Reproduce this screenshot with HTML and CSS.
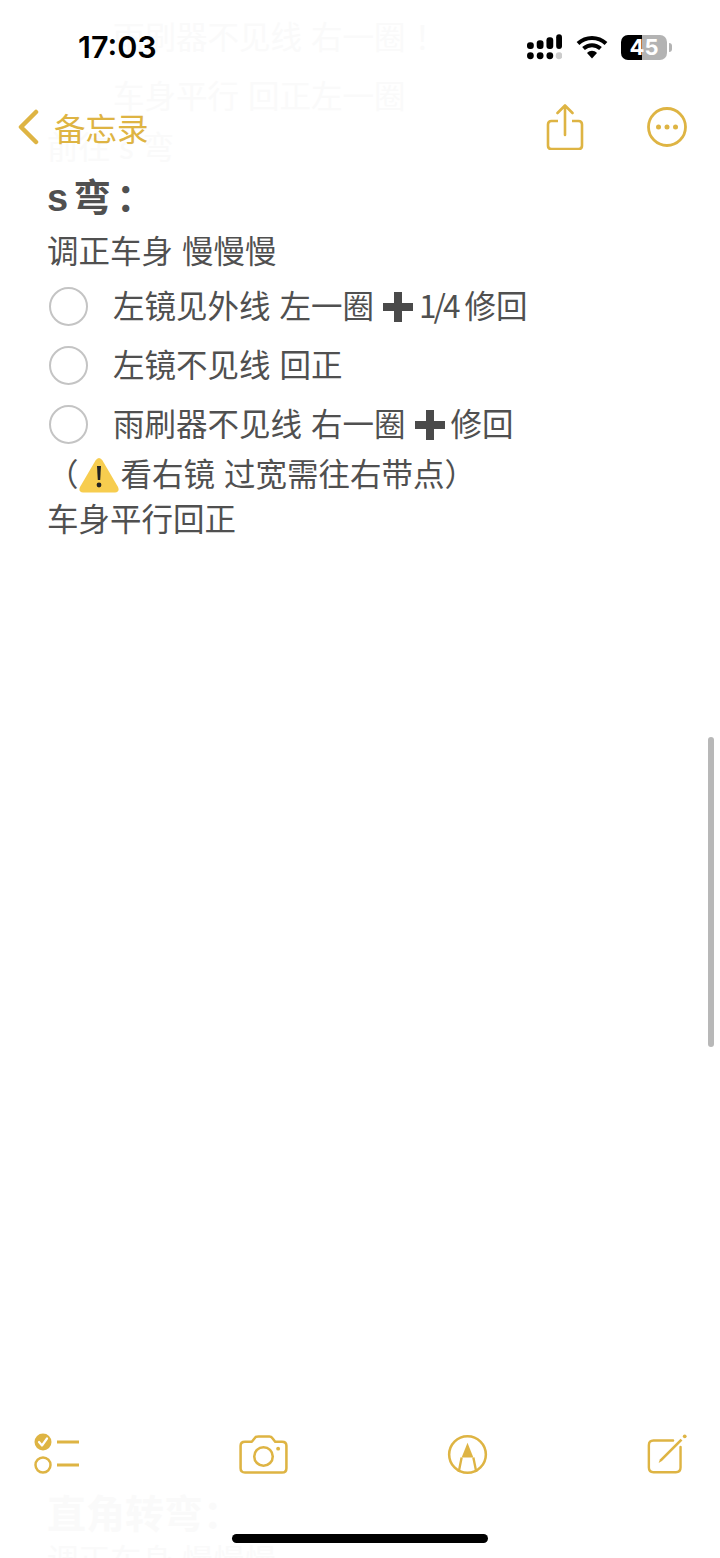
FILE: index.html
```html
<!DOCTYPE html>
<html>
<head>
	<meta charset="utf-8">
	<title>备忘录</title>
	<link rel="stylesheet" href="styles.css">
</head>
<body>
	<div class="page">
		<!-- faint text scrolled under the bars -->
		<div class="ghost ghost-1">雨刷器不见线 右一圈 ！</div>
		<div class="ghost ghost-2">车身平行 回正左一圈</div>
		<div class="ghost ghost-3">前往 s 弯</div>
		<div class="ghost ghost-4">直角转弯：</div>
		<div class="ghost ghost-5">调正车身 慢慢慢</div>

		<div class="statusbar">
			<span class="time">17:03</span>
			<div class="status-icons">
				<svg class="signal" width="35" height="26" viewBox="0 0 36 26">
					<g fill="#000">
						<rect x="0" y="8" width="7" height="7" rx="3"/>
						<rect x="10" y="6" width="7" height="9" rx="3"/>
						<rect x="20" y="3" width="7" height="12" rx="3"/>
						<rect x="30" y="0" width="6" height="15" rx="3"/>
						<circle cx="3.5" cy="22" r="3.5"/>
						<circle cx="13.5" cy="22" r="3.5"/>
						<circle cx="23.5" cy="22" r="3.5"/>
					</g>
					<circle cx="33" cy="22" r="3.5" fill="#ccc"/>
				</svg>
				<svg class="wifi" width="32" height="24" viewBox="0 0 32 24">
					<path d="M2 8.5C10 1 22 1 30 8.5" fill="none" stroke="#000" stroke-width="4"/>
					<path d="M7.5 13.5C12.5 9 19.5 9 24.5 13.5" fill="none" stroke="#000" stroke-width="4"/>
					<path d="M11 18C14 15 18 15 21 18L16 23.5Z" fill="#000"/>
				</svg>
				<div class="battery">
					<div class="battery-body"><span>45</span></div>
					<div class="battery-tip"></div>
				</div>
			</div>
		</div>

		<div class="navbar">
			<div class="back">
				<svg width="22" height="36" viewBox="0 0 22 36">
					<path d="M19 3L4 18L19 33" fill="none" stroke="#deb443" stroke-width="4.5" stroke-linecap="round" stroke-linejoin="round"/>
				</svg>
				<span>备忘录</span>
			</div>
			<div class="nav-actions">
				<svg width="38" height="46" viewBox="0 0 38 46">
					<path d="M12 17H5.500Q2 17 2 20.500V41.500Q2 45 5.500 45H32.500Q36 45 36 41.500V20.500Q36 17 32.500 17H26" fill="none" stroke="#deb443" stroke-width="2.600"/>
					<path d="M19 31V2M11.500 9L19 1.500L26.500 9" fill="none" stroke="#deb443" stroke-width="2.600" stroke-linecap="round" stroke-linejoin="round"/>
				</svg>
				<svg width="40" height="40" viewBox="0 0 40 40">
					<circle cx="20" cy="20" r="18.500" fill="none" stroke="#deb443" stroke-width="2.800"/>
					<circle cx="11.500" cy="20" r="2.500" fill="#deb443"/>
					<circle cx="20" cy="20" r="2.500" fill="#deb443"/>
					<circle cx="28.500" cy="20" r="2.500" fill="#deb443"/>
				</svg>
			</div>
		</div>

		<div class="note">
			<h1 class="note-title">s弯：</h1>
			<div class="line">调正车身 慢慢慢</div>
			<div class="check-row">
				<span class="circle"></span>
				<span>左镜见外线 左一圈<svg class="plus" width="30" height="30" viewBox="0 0 30 30"><path d="M11 0H19V11H30V19H19V30H11V19H0V11H11Z" fill="#4a4a4a"/></svg><span class="frac">1/4</span>修回</span>
			</div>
			<div class="check-row">
				<span class="circle"></span>
				<span>左镜不见线 回正</span>
			</div>
			<div class="check-row">
				<span class="circle"></span>
				<span>雨刷器不见线 右一圈<svg class="plus" width="30" height="30" viewBox="0 0 30 30"><path d="M11 0H19V11H30V19H19V30H11V19H0V11H11Z" fill="#4a4a4a"/></svg>修回</span>
			</div>
			<div class="line warn-line">（<svg class="warn" width="40" height="36" viewBox="0 0 40 36"><path d="M20 1Q22 1 23.500 3.500L39 30Q41 35 36 35.500H4Q-1 35 1 30L16.500 3.500Q18 1 20 1Z" fill="#f7cd4f"/><path d="M18 9H22L21.200 23H18.800Z" fill="#222"/><circle cx="20" cy="28" r="2.400" fill="#222"/></svg>看右镜 过宽需往右带点）</div>
			<div class="line">车身平行回正</div>
		</div>

		<div class="toolbar">
			<svg width="46" height="44" viewBox="0 0 46 44">
				<circle cx="9" cy="10" r="8.500" fill="#deb443"/>
				<path d="M5 10L8 13.500L13 6.500" fill="none" stroke="#fff" stroke-width="2.200" stroke-linecap="round" stroke-linejoin="round"/>
				<circle cx="9" cy="33" r="7.500" fill="none" stroke="#deb443" stroke-width="2.500"/>
				<path d="M23 10H45M23 33H45" stroke="#deb443" stroke-width="2.800"/>
			</svg>
			<svg width="49" height="39" viewBox="0 0 50 40">
				<path d="M6 7H13L17 2Q18 1.500 20 1.500H31Q33 1.500 34 3L37 7H44Q48.500 7 48.500 11V34Q48.500 38.500 44 38.500H6Q1.500 38.500 1.500 34V11Q1.500 7 6 7Z" fill="none" stroke="#deb443" stroke-width="2.600" stroke-linejoin="round"/>
				<circle cx="25" cy="22" r="9.500" fill="none" stroke="#deb443" stroke-width="2.600"/>
				<circle cx="40" cy="14" r="2" fill="#deb443"/>
			</svg>
			<svg width="41" height="41" viewBox="0 0 42 42">
				<circle cx="21" cy="21" r="18.800" fill="none" stroke="#deb443" stroke-width="2.600"/>
				<path d="M21 9L27 24H15Z" fill="#deb443"/>
				<path d="M15 24L12 39M27 24L30 39" fill="none" stroke="#deb443" stroke-width="2.400"/>
			</svg>
			<svg width="41" height="41" viewBox="0 0 44 44">
				<path d="M28 7H7Q2 7 2 12V36Q2 41 7 41H31Q36 41 36 36V14" fill="none" stroke="#deb443" stroke-width="2.600" stroke-linecap="round"/>
				<path d="M14 27L36 5L38 7L16 29L12.500 31Z" fill="#deb443"/>
				<circle cx="40.500" cy="2.500" r="2" fill="#deb443"/>
			</svg>
		</div>

		<div class="home-indicator"></div>
		<div class="scrollbar"></div>
	</div>
</body>
</html>
```

FILE: styles.css
```css
* {
	box-sizing: border-box;
}

html, body {
	margin: 0;
	padding: 0;
	background: #fff;
}

.page {
	position: relative;
	width: 720px;
	height: 1558px;
	overflow: hidden;
	display: flex;
	flex-direction: column;
	background: #fff;
	color: #505050;
	font-family: "Noto Sans CJK SC", "Noto Sans", sans-serif;
	font-size: 31.500px;
	word-spacing: 2px;
}

/* faint text under the bars */
.ghost {
	position: absolute;
	color: #fafafa;
	white-space: nowrap;
	line-height: 46px;
}
.ghost-1 { left: 113px; top: 12px; }
.ghost-2 { left: 113px; top: 71px; }
.ghost-3 { left: 47px; top: 122px; }
.ghost-4 { left: 47px; top: 1488px; font-size: 39px; font-weight: 700; }
.ghost-5 { left: 47px; top: 1535px; }

/* status bar */
.statusbar {
	position: relative;
	height: 100px;
	flex-shrink: 0;
	display: flex;
	justify-content: space-between;
	align-items: flex-start;
	padding: 28px 48px 0 78px;
}
.time {
	font-family: Inter, Roboto, sans-serif;
	font-weight: 600;
	font-size: 30.500px;
	line-height: 38px;
	color: #000;
}
.status-icons {
	display: flex;
	align-items: center;
	gap: 14px;
	padding-top: 6px;
}
.wifi {
	margin-right: -1px;
}
.battery {
	display: flex;
	align-items: center;
	gap: 2px;
}
.battery-body {
	width: 46px;
	height: 25px;
	border-radius: 7px;
	background: linear-gradient(90deg, #000 0 46%, #b3b3b3 46% 100%);
	color: #fff;
	font-family: Inter, Roboto, sans-serif;
	font-weight: 700;
	font-size: 22px;
	line-height: 25px;
	text-align: center;
}
.battery-tip {
	width: 3px;
	height: 9px;
	border-radius: 0 3px 3px 0;
	background: #b3b3b3;
}

/* nav */
.navbar {
	position: relative;
	height: 54px;
	flex-shrink: 0;
	display: flex;
	justify-content: space-between;
	align-items: center;
	padding: 0 33px 0 17px;
}
.back {
	display: flex;
	align-items: center;
	gap: 15px;
	color: #deb443;
}
.nav-actions {
	display: flex;
	align-items: center;
	gap: 63px;
}

/* note */
.note {
	position: relative;
	flex: 1;
	padding: 19px 0 0 47px;
}
.note-title {
	margin: 0 0 3px;
	font-family: "Liberation Sans", "Noto Sans CJK SC", sans-serif;
	font-size: 38px;
	font-weight: 700;
	line-height: 50px;
	letter-spacing: 5px;
}
.line {
	line-height: 46px;
	white-space: nowrap;
}
.line + .check-row {
	margin-top: 2px;
}
.check-row {
	display: flex;
	align-items: center;
	gap: 25px;
	height: 59px;
	white-space: nowrap;
}
.circle {
	width: 39px;
	height: 39px;
	margin-left: 2px;
	margin-top: 6px;
	border-radius: 50%;
	border: 2px solid #c4c4c4;
	flex-shrink: 0;
}
.plus {
	vertical-align: -4px;
	margin: 0 6px 0 9px;
}
.frac {
	letter-spacing: -3px;
	margin-right: 7px;
}
.warn-line {
	line-height: 43px;
}
.warn {
	vertical-align: -7px;
	margin-right: 2px;
}

/* bottom */
.toolbar {
	position: relative;
	flex-shrink: 0;
	display: flex;
	justify-content: space-between;
	align-items: center;
	height: 44px;
	padding: 0 32px 0 34px;
	margin-bottom: 82px;
}
.home-indicator {
	position: absolute;
	left: 232px;
	bottom: 15px;
	width: 256px;
	height: 9px;
	border-radius: 5px;
	background: #000;
}
.scrollbar {
	position: absolute;
	left: 708px;
	top: 737px;
	width: 6px;
	height: 310px;
	border-radius: 3px;
	background: #b8b8b8;
}
```
